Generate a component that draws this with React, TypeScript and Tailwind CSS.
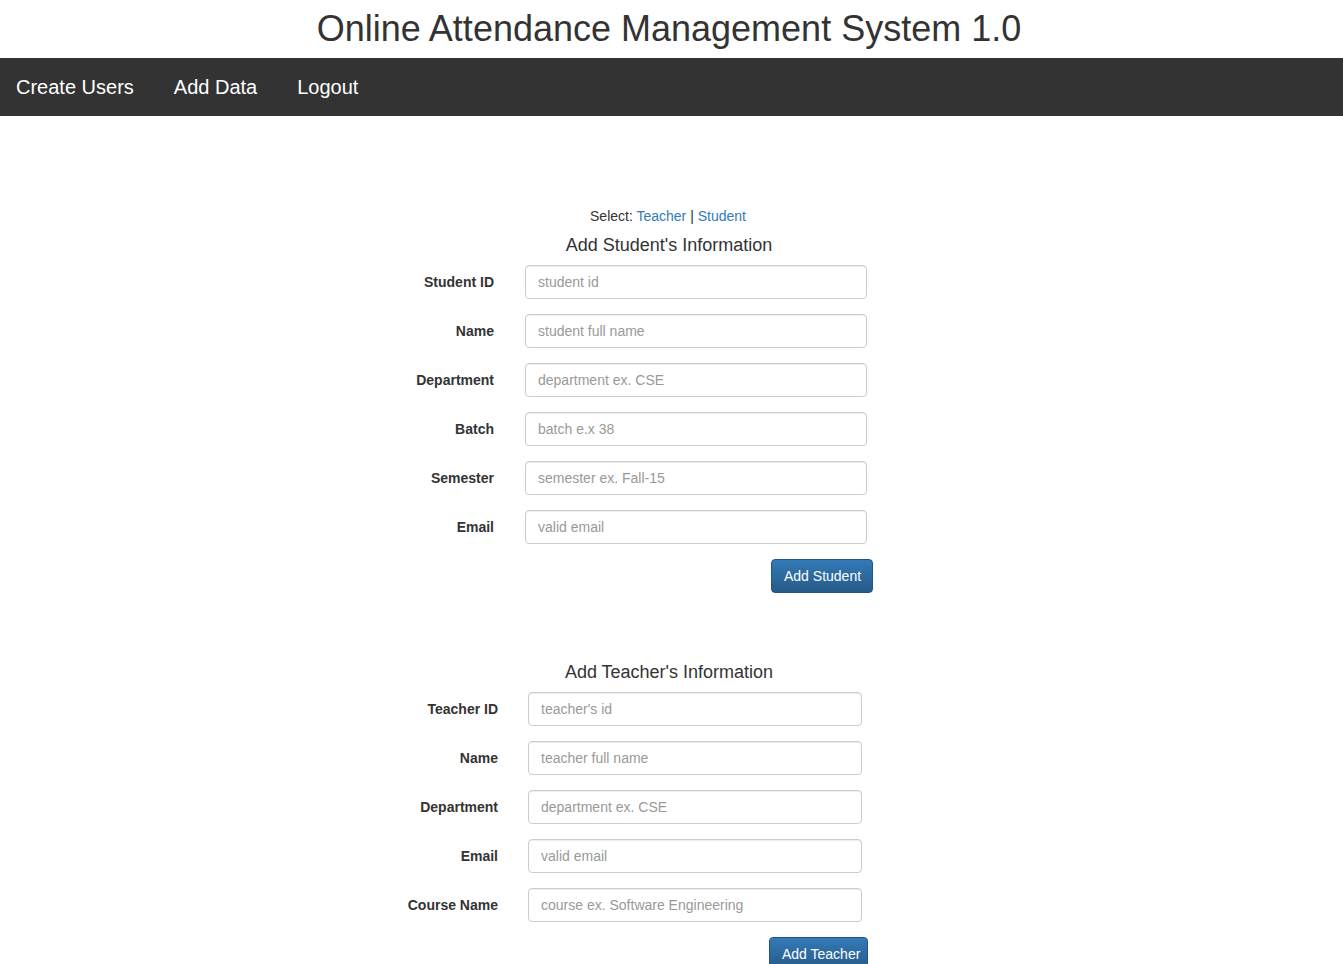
import React from "react";

type Field = { label: string; placeholder: string };

const studentFields: Field[] = [
  { label: "Student ID", placeholder: "student id" },
  { label: "Name", placeholder: "student full name" },
  { label: "Department", placeholder: "department ex. CSE" },
  { label: "Batch", placeholder: "batch e.x 38" },
  { label: "Semester", placeholder: "semester ex. Fall-15" },
  { label: "Email", placeholder: "valid email" },
];

const teacherFields: Field[] = [
  { label: "Teacher ID", placeholder: "teacher's id" },
  { label: "Name", placeholder: "teacher full name" },
  { label: "Department", placeholder: "department ex. CSE" },
  { label: "Email", placeholder: "valid email" },
  { label: "Course Name", placeholder: "course ex. Software Engineering" },
];

type FormProps = {
  fields: Field[];
  labelCol: string;
  gap: string;
  inputCol: string;
  button: string;
  buttonPad: string;
};

const InfoForm = ({ fields, labelCol, gap, inputCol, button, buttonPad }: FormProps) => {
  return (
    <div className="flex flex-col gap-[15px]">
      {fields.map((f) => (
        <div key={f.label} className={`flex items-center ${gap}`}>
          <label
            className={`${labelCol} text-right text-[14px] font-bold text-[#333] whitespace-nowrap`}
          >
            {f.label}
          </label>
          <input
            type="text"
            placeholder={f.placeholder}
            className={`${inputCol} h-[34px] rounded-[4px] border border-[#ccc] bg-white px-3 text-[14px] text-[#555] placeholder:text-[#999] shadow-[inset_0_1px_1px_rgba(0,0,0,0.075)] outline-none`}
          />
        </div>
      ))}
      <div className="flex justify-end -mr-[6px]">
        <button
          className={`h-[34px] rounded-[4px] border border-[#245580] bg-gradient-to-b from-[#337ab7] to-[#265a88] ${buttonPad} pl-3 pr-0 text-left text-[14px] text-white whitespace-nowrap overflow-hidden`}
        >
          {button}
        </button>
      </div>
    </div>
  );
};

const App = () => {
  return (
    <div className="min-h-screen bg-white font-['Liberation_Sans',Arial,sans-serif] text-[#333]">
      <h1 className="h-[58px] pr-[5px] text-center text-[36px] leading-[58px] text-[#333]">
        Online Attendance Management System 1.0
      </h1>

      <nav className="flex h-[58px] items-center gap-10 bg-[#333] pl-4 text-[20px] text-white">
        <a href="#">Create Users</a>
        <a href="#">Add Data</a>
        <a href="#">Logout</a>
      </nav>

      <main className="pr-[5px] pt-[90px]">
        <p className="pr-[2px] text-center text-[14px] leading-[20px]">
          Select: <a href="#" className="text-[#337ab7]">Teacher</a> |{" "}
          <a href="#" className="text-[#337ab7]">Student</a>
        </p>

        <h4 className="mt-[9px] text-center text-[18px] leading-[20px]">
          Add Student's Information
        </h4>
        <div className="mx-auto mt-[10px] w-[590px]">
          <div className="w-[493px]">
            <InfoForm
              fields={studentFields}
              labelCol="w-[120px]"
              gap="gap-[31px]"
              inputCol="w-[342px]"
              button="Add Student"
              buttonPad="w-[102px]"
            />
          </div>
        </div>

        <h4 className="mt-[69px] text-center text-[18px] leading-[20px]">
          Add Teacher's Information
        </h4>
        <div className="mx-auto mt-[10px] w-[590px]">
          <div className="w-[488px]">
            <InfoForm
              fields={teacherFields}
              labelCol="w-[124px]"
              gap="gap-[30px]"
              inputCol="w-[334px]"
              button="Add Teacher"
              buttonPad="w-[99px]"
            />
          </div>
        </div>
      </main>
    </div>
  );
};

export default App;
